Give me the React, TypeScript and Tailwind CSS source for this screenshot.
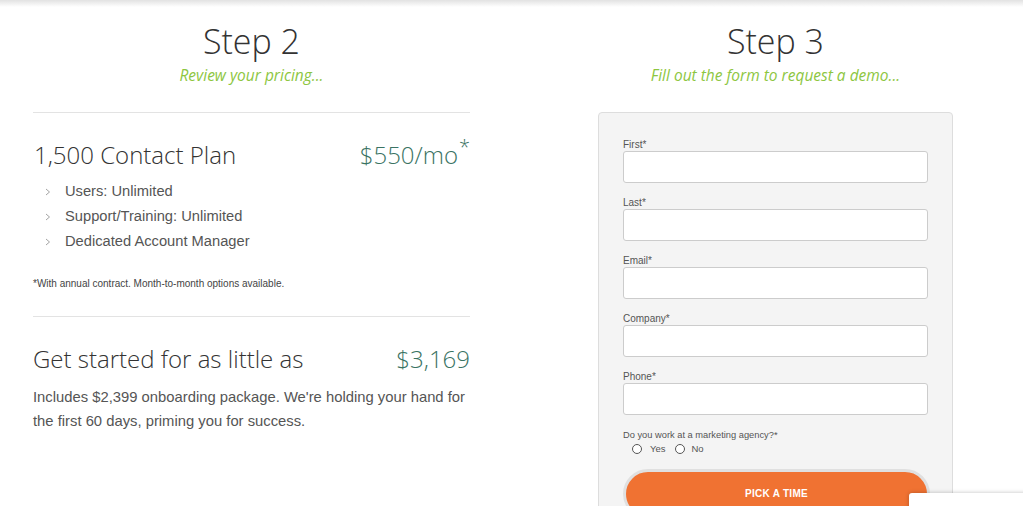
import React from "react";

const heading = { fontFamily: '"Open Sans", sans-serif' };

function Field({ label }: { label: string }) {
  return (
    <div className="mb-[14px]">
      <div className="text-[10px] leading-[12px] text-[#555]">{label}</div>
      <div className="h-[32px] w-[305px] bg-white border border-[#cccccc] rounded-[3px]" />
    </div>
  );
}

function Chevron() {
  return (
    <svg width="6" height="8" viewBox="0 0 6 8" className="mr-[14px] ml-[12px]">
      <path d="M1 1 L4.5 4 L1 7" fill="none" stroke="#999" strokeWidth="0.9" />
    </svg>
  );
}

export default function App() {
  return (
    <div className="relative w-[1023px] h-[506px] overflow-hidden bg-white font-['Liberation_Sans',Arial,sans-serif]">
      <div className="h-[7px] bg-gradient-to-b from-[#e2e2e2] to-white" />
      <div className="flex">
        {/* Left column */}
        <div className="ml-[33px] w-[437px]">
          <div className="text-center">
            <div style={heading} className="text-[34px] font-light leading-[40px] text-[#333] mt-[14px]">Step 2</div>
            <div style={heading} className="italic text-[15.5px] leading-[20px] text-[#8dc63f] mt-[4px]">Review your pricing...</div>
          </div>
          <div className="mt-[27px] h-px bg-[#e3e3e3]" />
          <div className="flex justify-between items-start mt-[26px] pl-[1px]">
            <div style={heading} className="text-[24px] font-light leading-[32px] text-[#333]">1,500 Contact Plan</div>
            <div style={heading} className="text-[24px] font-light leading-[32px] text-[#3a7363] flex">
              <span>$550/mo</span>
              <span className="text-[20px] leading-[20px] -mt-[2px] ml-[1px]">*</span>
            </div>
          </div>
          <ul className="mt-[8px] text-[14.7px] leading-[25px] text-[#555]">
            {["Users: Unlimited", "Support/Training: Unlimited", "Dedicated Account Manager"].map((t) => (
              <li key={t} className="flex items-center">
                <Chevron />
                <span>{t}</span>
              </li>
            ))}
          </ul>
          <div className="mt-[23px] text-[10px] leading-[14px] text-[#444]">*With annual contract. Month-to-month options available.</div>
          <div className="mt-[25px] h-px bg-[#e3e3e3]" />
          <div className="flex justify-between items-start mt-[26px]">
            <div style={heading} className="text-[24px] font-light leading-[32px] text-[#333]">Get started for as little as</div>
            <div style={heading} className="text-[24px] font-light leading-[32px] text-[#3a7363]">$3,169</div>
          </div>
          <p className="mt-[10px] text-[14.8px] leading-[24px] text-[#555]">
            Includes $2,399 onboarding package. We're holding your hand for the first 60 days, priming you for success.
          </p>
        </div>

        {/* Right column */}
        <div className="ml-[128px] w-[355px]">
          <div className="text-center">
            <div style={heading} className="text-[34px] font-light leading-[40px] text-[#333] mt-[14px]">Step 3</div>
            <div style={heading} className="italic text-[15.5px] leading-[20px] text-[#8dc63f] mt-[4px]">Fill out the form to request a demo...</div>
          </div>
          <div className="mt-[27px] h-[420px] bg-[#f4f4f4] border border-[#dddddd] rounded-[4px] pl-[24px] pt-[26px]">
            <Field label="First*" />
            <Field label="Last*" />
            <Field label="Email*" />
            <Field label="Company*" />
            <Field label="Phone*" />
            <div className="mt-[13px] text-[9.3px] leading-[12px] text-[#555]">Do you work at a marketing agency?*</div>
            <div className="flex items-center mt-[1px] ml-[9px] text-[9.5px] text-[#555]">
              <span className="w-[10px] h-[10px] rounded-full border border-[#555] bg-white" />
              <span className="ml-[8px]">Yes</span>
              <span className="ml-[9px] w-[10px] h-[10px] rounded-full border border-[#555] bg-white" />
              <span className="ml-[7px]">No</span>
            </div>
            <div className="mt-[13px] w-[307px] h-[50px] rounded-full bg-[#f07232] border-[3px] border-[#e0e0e0] flex justify-center pt-[14px] text-white font-bold text-[10px] tracking-[0.3px]">
              PICK A TIME
            </div>
          </div>
        </div>
      </div>
      <div className="absolute left-[909px] top-[493px] w-[130px] h-[40px] bg-white rounded-[3px] shadow-[0_0_4px_rgba(0,0,0,0.25)]" />
    </div>
  );
}
